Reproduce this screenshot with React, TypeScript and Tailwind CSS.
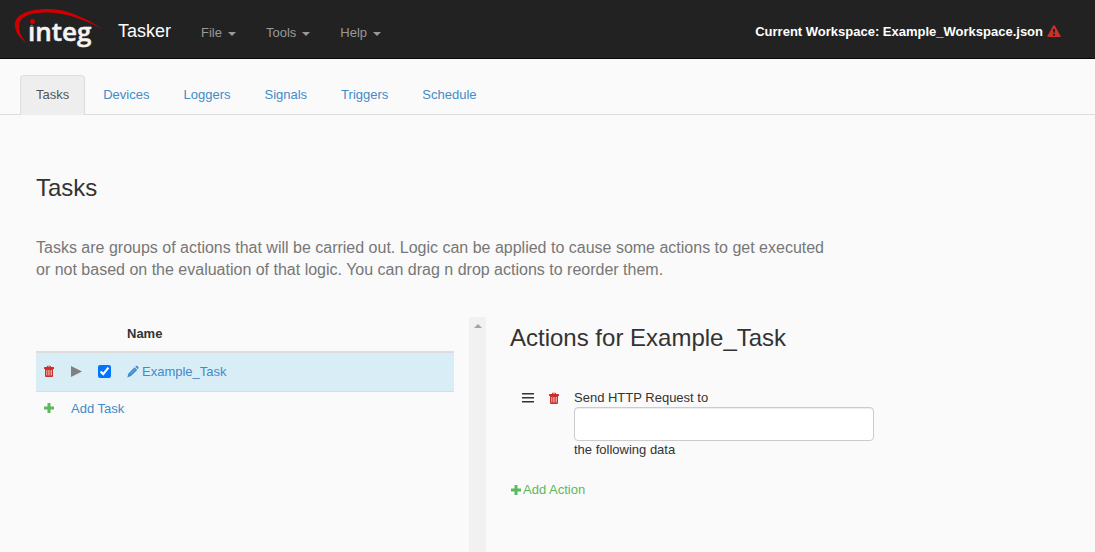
import React from 'react';

const menus = ['File', 'Tools', 'Help'];
const tabs = ['Tasks', 'Devices', 'Loggers', 'Signals', 'Triggers', 'Schedule'];

function Logo() {
  return (
    <svg className="h-[42px] w-[88px]" viewBox="0 0 88 42" role="img" aria-label="integ">
      <path
        d="M13 35 C4 30 0 21 1 15 C3 5 17 1 34 1 C55 1 75 12 88 21 C73 13 54 5 35 4.500 C19 4 8 7 5.500 15 C4 22 7 30 13 35Z"
        fill="#cc0000"
      />
      <text x="14" y="33" fontSize="26" fontWeight="600" fontFamily="'Open Sans', sans-serif" fill="#f4f4f4" stroke="#f4f4f4" strokeWidth="0.5">
        integ
      </text>
      <rect x="15" y="10" width="7" height="7" fill="#222" />
      <circle cx="18.500" cy="13.500" r="2.500" fill="#cc0000" />
    </svg>
  );
}

function TrashIcon() {
  return (
    <svg className="h-[13px] w-3" viewBox="0 0 12 13" fill="#c9302c" aria-hidden="true">
      <path fillRule="evenodd" d="M4 2V1.500Q4 .8 4.700 .8H7.300Q8 .8 8 1.500V2H10.500Q11 2 11 2.500V4H1V2.500Q1 2 1.500 2ZM5 2H7V1.500H5Z" />
      <path d="M2 4H10V11Q10 12 9 12H3Q2 12 2 11Z" />
      <path d="M3.700 5V10.500M5.300 5V10.500M6.900 5V10.500M8.500 5V10.500" stroke="#f3c3bb" strokeWidth="0.8" />
    </svg>
  );
}

function PlusIcon() {
  return (
    <svg className="h-[13px] w-3" viewBox="0 0 12 13" fill="#5cb85c" aria-hidden="true">
      <path d="M4.500 1.500Q4.500 1 5 1H7Q7.500 1 7.500 1.500V4.500H10.500Q11 4.500 11 5V7Q11 7.500 10.500 7.500H7.500V10.500Q7.500 11 7 11H5Q4.500 11 4.500 10.500V7.500H1.500Q1 7.500 1 7V5Q1 4.500 1.500 4.500H4.500Z" />
    </svg>
  );
}

function PencilIcon() {
  return (
    <svg className="h-[13px] w-3" viewBox="0 0 12 13" fill="#428bca" aria-hidden="true">
      <path d="M8.300 1.600L9 1Q9.800 .4 10.500 1.100L11.300 1.900Q12 2.700 11.300 3.500L10.700 4.200ZM7.600 2.200L10.200 4.900L4 11.100L.3 12.400L1.400 8.400Z" />
      <path d="M3.400 8.900L7.900 4.400" stroke="#8ab8df" strokeWidth="0.7" />
    </svg>
  );
}

function WarningIcon() {
  return (
    <svg className="h-[13px] w-[14px]" viewBox="0 0 14 13" fill="#c9302c" aria-hidden="true">
      <path
        fillRule="evenodd"
        d="M7 0Q7.500 0 7.800 .6L13.700 11.200Q14 12 13.200 12H.8Q0 12 .3 11.200L6.200 .6Q6.500 0 7 0ZM6 4V6L6.600 8.200H7.400L8 6V4ZM6 9V10.800H8V9Z"
      />
    </svg>
  );
}

function Navbar() {
  return (
    <header className="flex h-[59px] items-center border-b border-[#080808] bg-[#222]">
      <a href="#" className="ml-[14px]">
        <Logo />
      </a>
      <a href="#" className="ml-4 pt-1 text-lg text-white">Tasker</a>
      <nav className="ml-[30px] flex gap-[30px] pt-[7px]">
        {menus.map(menu => (
          <button key={menu} className="flex items-center gap-1.5 text-[#999]">
            {menu}
            <span className="mt-0.5 border-x-4 border-t-4 border-x-transparent border-t-[#999]" />
          </button>
        ))}
      </nav>
      <div className="mr-[34px] ml-auto flex items-center gap-1 pt-[5px] font-bold text-white">
        Current Workspace: Example_Workspace.json
        <WarningIcon />
      </div>
    </header>
  );
}

function TaskList() {
  return (
    <section className="flex w-[450px] shrink-0 justify-between">
      <div className="w-[418px]">
        <table className="w-full border-collapse text-left">
          <thead>
            <tr className="h-[35px] border-b-2 border-[#ddd]">
              <th className="w-[27px]" />
              <th className="w-[27px]" />
              <th className="w-[29px]" />
              <th className="pl-2">Name</th>
            </tr>
          </thead>
          <tbody>
            <tr className="h-[39px] border-b border-[#ddd] bg-[#d9edf7]">
              <td className="pl-[7px]">
                <button aria-label="Delete task" className="block"><TrashIcon /></button>
              </td>
              <td className="pl-2">
                <button aria-label="Run task" className="block">
                  <svg className="h-[13px] w-[11px]" viewBox="0 0 11 13" fill="#808080"><path d="M0 1V12L11 6.500Z" /></svg>
                </button>
              </td>
              <td className="pl-2">
                <input type="checkbox" defaultChecked aria-label="Enable Example_Task" className="block h-[13px] w-[13px] accent-[#0075ff]" />
              </td>
              <td className="pl-2">
                <a href="#" className="flex items-center gap-[3px] text-[#428bca]">
                  <PencilIcon />
                  Example_Task
                </a>
              </td>
            </tr>
            <tr className="h-[35px]">
              <td className="pl-[7px]"><PlusIcon /></td>
              <td colSpan={3} className="pl-2">
                <a href="#" className="text-[#428bca]">Add Task</a>
              </td>
            </tr>
          </tbody>
        </table>
      </div>
      <div className="flex w-[17px] justify-center bg-[#f1f1f1] pt-[7px]">
        <span className="h-0 border-x-4 border-b-4 border-x-transparent border-b-[#a3a3a3]" />
      </div>
    </section>
  );
}

function Actions() {
  return (
    <section className="min-w-0 flex-1 pt-1">
      <h2 className="text-2xl leading-[34px]">Actions for Example_Task</h2>
      <div className="mt-[34px] flex pl-3">
        <button aria-label="Reorder action" className="mt-[3px] h-3">
          <svg className="h-3 w-3" viewBox="0 0 12 12" fill="#333"><path d="M0 1H12V2.600H0ZM0 5H12V6.600H0ZM0 9H12V10.600H0Z" /></svg>
        </button>
        <button aria-label="Delete action" className="mt-[3px] ml-[14px] h-[13px]"><TrashIcon /></button>
        <div className="ml-[14px] flex w-[300px] flex-col">
          <label htmlFor="request-url">Send HTTP Request to</label>
          <input
            id="request-url"
            type="text"
            className="h-[34px] rounded border border-[#ccc] bg-white px-3 shadow-[inset_0_1px_1px_rgba(0,0,0,0.075)]"
          />
          <span>the following data</span>
        </div>
      </div>
      <button className="mt-[22px] flex items-center gap-px text-[#5cb85c]">
        <PlusIcon />
        Add Action
      </button>
    </section>
  );
}

export default function App() {
  return (
    <div className="flex min-h-screen flex-col bg-[#fafafa] font-['Liberation_Sans',Arial,sans-serif] text-[13px] leading-[18px] text-[#333]">
      <Navbar />
      <nav className="mt-4 flex gap-0.5 border-b border-[#ddd] pl-5">
        {tabs.map(tab => (
          <a
            key={tab}
            href="#"
            className={
              tab === 'Tasks'
                ? '-mb-px rounded-t border border-b-0 border-[#ddd] bg-[#eee] px-[15px] pt-[10px] pb-[11px] text-[#555]'
                : 'border border-b-0 border-transparent px-[15px] py-[10px] text-[#428bca]'
            }
          >
            {tab}
          </a>
        ))}
      </nav>
      <main className="flex flex-1 flex-col pl-9">
        <h1 className="mt-[58px] text-2xl leading-[30px]">Tasks</h1>
        <p className="mt-[34px] max-w-[800px] text-base leading-[22px] text-[#777]">
          Tasks are groups of actions that will be carried out. Logic can be applied to cause some actions to get executed
          or not based on the evaluation of that logic. You can drag n drop actions to reorder them.
        </p>
        <div className="mt-9 flex flex-1 gap-6">
          <TaskList />
          <Actions />
        </div>
      </main>
    </div>
  );
}
